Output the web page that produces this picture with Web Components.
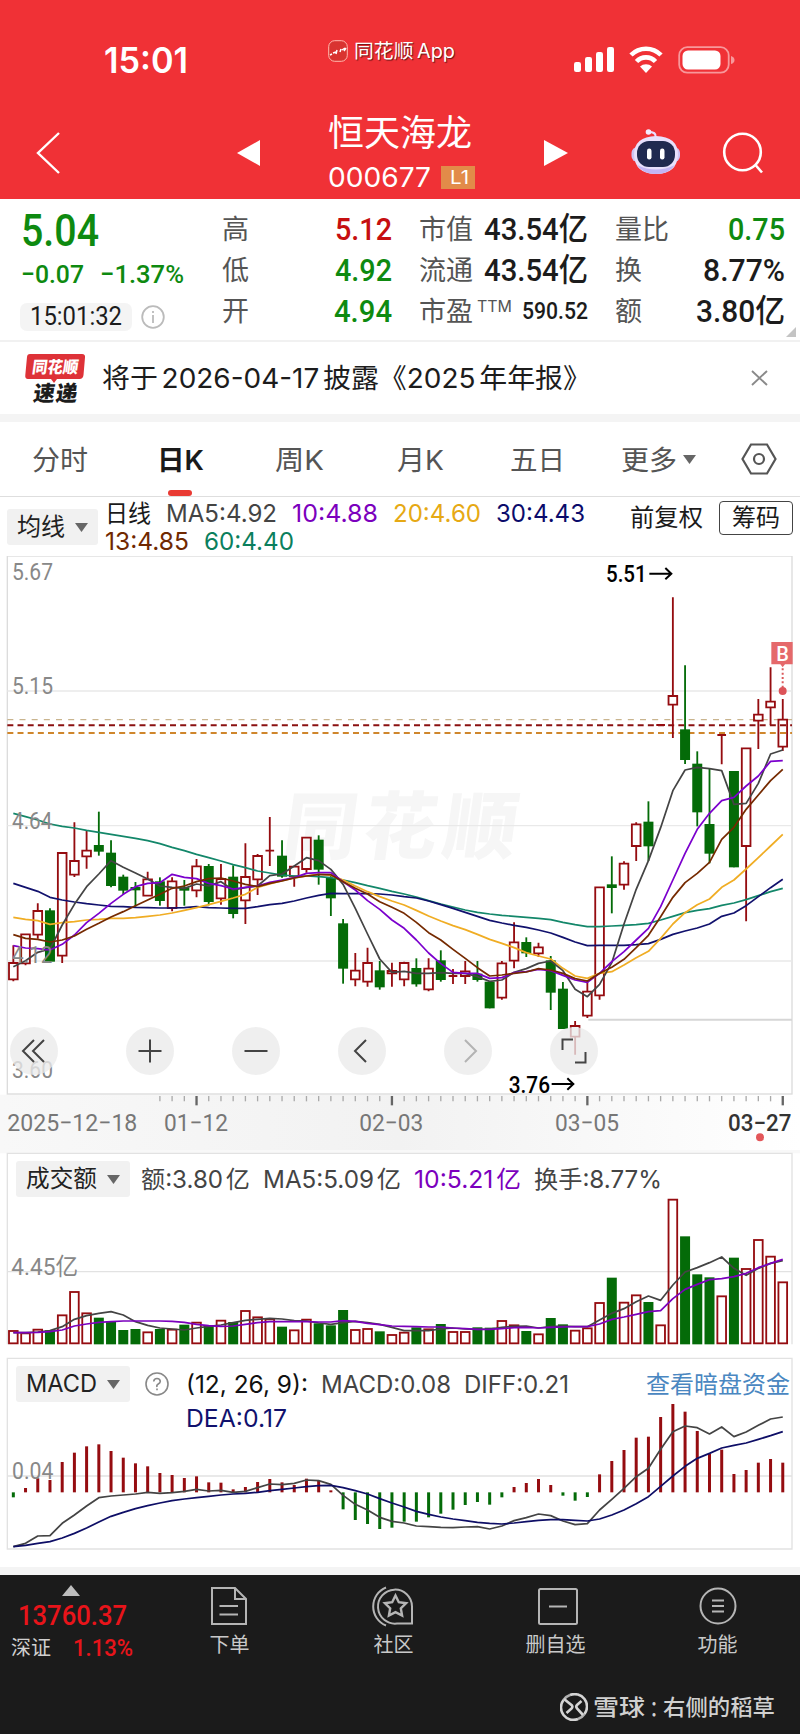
<!DOCTYPE html>
<html lang="zh-CN">
<head>
<meta charset="utf-8">
<title>恒天海龙 000677</title>
<style>
html,body{
    margin:0;
    padding:0;
    background:#fff;
}
body{
    width:800px;
    height:1734px;
    overflow:hidden;
}
</style>
</head>
<body>
<stock-app></stock-app>
<script>
// text that is squeezed or stretched to a fixed width
class FitText extends HTMLElement {

    constructor() {
        super();
        const shadowRoot = this.attachShadow({ mode: 'open' });
        shadowRoot.innerHTML = `
        <style>
        :host{
            display:inline-block;
            white-space:nowrap;
            flex:none;
        }
        span{
            display:inline-block;
            transform-origin:0 50%;
        }
        </style>
        <span><slot></slot></span>
        `
    }

    connectedCallback() {
        const w = Number(this.getAttribute('w'));
        const span = this.shadowRoot.querySelector('span');
        this.style.width = w + 'px';
        span.style.transform = `scaleX(${w/span.getBoundingClientRect().width})`;
    }
}

customElements.define('fit-text', FitText);

const sans = `Inter,"Noto Sans CJK SC",sans-serif`;
const din = `Roboto,"Noto Sans CJK SC",sans-serif`;

// elements that only have markup and styles
function define(name, html) {
    customElements.define(name, class extends HTMLElement {
        constructor() {
            super();
            this.attachShadow({ mode: 'open' }).innerHTML = html;
        }
    });
}

define('status-bar', `
<style>
:host{
    display:flex;
    align-items:center;
    height:98px;
    padding-top:12px;
    box-sizing:border-box;
    color:#fff;
}
.time{
    margin-left:104px;
    padding-top:9px;
    font:600 35px/36px ${sans};
}
.app{
    display:flex;
    align-items:center;
    margin:-8px 0 0 140px;
    font:400 19.5px/24px ${sans};
    text-shadow:1px 1px 1px rgba(0,0,0,.6);
    word-spacing:-2px;
}
.app svg{
    margin-right:6px;
}
.state{
    margin:10px 0 0 119px;
}
</style>
<fit-text class="time" w="84">15:01</fit-text>
<div class="app">
    <svg width="20" height="22" fill="none" stroke="#ffb9ae"><rect x=".7" y=".7" width="18.6" height="20.6" rx="6" fill="#d93430"/><path stroke="#fff" stroke-width="1.5" d="M2 15l2-1M5 13l3-1M8 14l1-4M12 12l1-3M14 10l3-2M16 11l2-3"/></svg>
    <fit-text w="101">同花顺 App</fit-text>
</div>
<svg class="state" width="162" height="28" fill="#fff">
    <rect x="0" y="16" width="7" height="10" rx="2.2"/><rect x="11" y="11" width="7" height="15" rx="2.2"/><rect x="22" y="6" width="7" height="20" rx="2.2"/><rect x="33" y="1" width="7" height="25" rx="2.2"/>
    <g fill="none" stroke="#fff" stroke-width="4.6"><path d="M57 9a21 21 0 0 1 30 0"/><path d="M62.5 15.5a13 13 0 0 1 19 0"/></g>
    <path d="M66 20.5a9 9 0 0 1 12 0L72 27z"/>
    <rect x="105.2" y="1.2" width="49.5" height="25.5" rx="8" fill="none" stroke="#fff" stroke-opacity=".5" stroke-width="1.8"/>
    <rect x="108.5" y="4.5" width="38" height="19" rx="5.5"/>
    <path fill-opacity=".5" d="M157 10q3.5 1 3.5 4t-3.5 4z"/>
</svg>
`);

define('nav-bar', `
<style>
:host{
    display:flex;
    align-items:center;
    height:102px;
    color:#fff;
}
svg{
    flex:none;
}
.name{
    display:flex;
    flex-direction:column;
    width:215px;
    height:98px;
    margin-left:68px;
}
.stock{
    font:400 36px/46px ${sans};
    margin-top:10px;
}
.code{
    display:flex;
    align-items:center;
    height:26px;
    margin-top:8px;
    font:400 27.5px/26px ${sans};
}
.badge{
    width:34px;
    height:23px;
    margin-left:10px;
    background:#e28b49;
    font:400 18px/23px ${sans};
    text-align:center;
}
</style>
<svg style="margin:8px 0 0 36px" width="24" height="42" fill="none" stroke="#fff" stroke-width="2.4"><path d="M23 1L2 21L23 41"/></svg>
<svg style="margin:8px 0 0 177px" width="23" height="26" fill="#fff"><path d="M23 0V26L0 13z"/></svg>
<div class="name">
    <fit-text class="stock" w="144">恒天海龙</fit-text>
    <div class="code"><fit-text w="103">000677</fit-text><div class="badge"><fit-text w="19">L1</fit-text></div></div>
</div>
<svg style="margin:8px 0 0 1px" width="24" height="26" fill="#fff"><path d="M0 0V26L24 13z"/></svg>
<svg style="margin:6px 0 0 62px" width="52" height="48">
    <path d="M25.5 9q1-5-7-5" fill="none" stroke="#e9ddff" stroke-width="2.2"/>
    <circle cx="18.500" cy="4" r="2.800" fill="#f3eaff"/>
    <rect x="1.500" y="19" width="48.500" height="15" rx="6" fill="#cfc4f4"/>
    <path d="M26 8Q48 8.500 48 27Q47 46 26 46T4 27Q4 8.500 26 8z" fill="#e8e0fc"/>
    <path d="M7 37q19 9 38 0q-6 9-19 9T7 37" fill="#c3b5f5"/>
    <rect x="7" y="13" width="38" height="26" rx="12" fill="#202a50"/>
    <rect x="17" y="20.500" width="4.500" height="11" rx="2.200" fill="#fff"/>
    <rect x="30" y="20.500" width="4.500" height="11" rx="2.200" fill="#fff"/>
</svg>
<svg style="margin:8px 0 0 40px" width="44" height="42" fill="none" stroke="#fff" stroke-width="2.6"><circle cx="20.500" cy="20" r="18.300"/><path d="M33.500 33L40 40.500"/></svg>
`);

define('quote-board', `
<style>
:host{
    display:grid;
    grid-template-columns:201px 191px 196px 197px;
    height:142px;
    box-sizing:border-box;
    border-bottom:2px solid #f1f1f1;
    font:400 27px/41px ${sans};
    color:#555;
    position:relative;
}
.now{
    display:flex;
    flex-direction:column;
    padding-left:21px;
    color:#0e8a10;
    font-family:${din};
}
.price{
    font-size:43.500px;
    font-weight:500;
    line-height:44px;
    margin-top:10px;
}
.change{
    display:flex;
    gap:16px;
    font-size:26.500px;
    font-weight:500;
    line-height:30px;
    margin-top:5px;
}
.clock{
    display:flex;
    align-items:center;
    gap:9px;
    margin:14px 0 0 -1px;
}
.pill{
    width:112px;
    height:28px;
    border-radius:7px;
    background:#f4f4f4;
    color:#1c1c1c;
    font-size:25px;
    line-height:28px;
    text-align:center;
}
.col{
    display:flex;
    flex-direction:column;
    padding-top:9px;
}
.row{
    display:flex;
    align-items:center;
    justify-content:space-between;
    height:41px;
    padding-left:27px;
}
.col.first .row{
    padding-left:21px;
}
b{
    font:500 32px/41px ${din};
    color:#1c1c1c;
}
.up{
    color:#c60f10;
}
.down{
    color:#0e8a10;
}
.ttm{
    font-size:15.500px;
    line-height:16px;
    margin:-9px auto 0 4px;
}
.corner{
    position:absolute;
    right:4px;
    bottom:3px;
}
</style>
<div class="now">
    <fit-text class="price" w="78">5.04</fit-text>
    <div class="change"><fit-text w="63">−0.07</fit-text><fit-text w="84">−1.37%</fit-text></div>
    <div class="clock">
        <div class="pill"><fit-text w="92">15:01:32</fit-text></div>
        <svg width="24" height="24" fill="none" stroke="#bbb" stroke-width="1.800"><circle cx="12" cy="12" r="10.800"/><path d="M12 6v2M12 10v8"/></svg>
    </div>
</div>
<div class="col first">
    <div class="row">高<b class="up"><fit-text w="57">5.12</fit-text></b></div>
    <div class="row">低<b class="down"><fit-text w="57">4.92</fit-text></b></div>
    <div class="row">开<b class="down"><fit-text w="58">4.94</fit-text></b></div>
</div>
<div class="col">
    <div class="row">市值<b><fit-text w="104">43.54亿</fit-text></b></div>
    <div class="row">流通<b><fit-text w="104">43.54亿</fit-text></b></div>
    <div class="row">市盈<fit-text class="ttm" w="35">TTM</fit-text><b style="font-size:24px"><fit-text w="66">590.52</fit-text></b></div>
</div>
<div class="col">
    <div class="row">量比<b class="down"><fit-text w="57">0.75</fit-text></b></div>
    <div class="row">换<b><fit-text w="82">8.77%</fit-text></b></div>
    <div class="row">额<b><fit-text w="89">3.80亿</fit-text></b></div>
</div>
<svg class="corner" width="10" height="10"><path d="M10 0V10H0z" fill="#c4c4c4"/></svg>
`);

define('news-bar', `
<style>
:host{
    display:flex;
    align-items:center;
    height:80px;
    box-sizing:border-box;
    border-bottom:8px solid #f4f4f4;
    font:400 27px/40px ${sans};
    color:#1c1c1c;
}
svg{
    flex:none;
}
</style>
<svg style="margin:0 0 0 24px" width="64" height="56" text-anchor="middle">
    <path d="M6 4H58Q61.500 4 61 7.500L59.500 25Q59 29 55.500 29H33L30 33L27 29H4Q.8 29 1.300 25L3 7Q3.200 4 6 4z" fill="#de3238"/>
    <text transform="translate(30.500 23) skewX(-8)" font-family='"Noto Sans CJK SC",sans-serif' font-size="16.500" font-weight="900" fill="#fff" textLength="46" lengthAdjust="spacingAndGlyphs">同花顺</text>
    <text transform="translate(30.500 51) skewX(-8)" font-family='"Noto Sans CJK SC",sans-serif' font-size="21.500" font-weight="900" fill="#1c1c1c" textLength="44">速递</text>
</svg>
<fit-text style="margin:2px 0 0 14px;word-spacing:-4px" w="489">将于 2026-04-17 披露《2025 年年报》</fit-text>
<svg style="margin-left:160px" width="17" height="16" fill="none" stroke="#8a8a8a" stroke-width="1.900"><path d="M1 1L16 15M16 1L1 15"/></svg>
`);

define('period-tabs', `
<style>
:host{
    display:flex;
    align-items:center;
    height:75px;
    box-sizing:border-box;
    border-bottom:1px solid #dedede;
    font:400 27.500px/76px ${sans};
    color:#555;
}
.on{
    display:flex;
    flex-direction:column;
    align-items:center;
    height:74px;
    color:#1a1a1a;
    font-weight:600;
}
.on i{
    width:24px;
    height:6px;
    border-radius:3px;
    margin:-8px 2px 0 0;
    background:#e93a33;
}
svg{
    flex:none;
}
</style>
<fit-text style="margin:2px 0 0 32px" w="56">分时</fit-text>
<div class="on" style="margin-left:69px"><fit-text w="47">日K</fit-text><i></i></div>
<fit-text style="margin:2px 0 0 71px" w="49">周K</fit-text>
<fit-text style="margin:2px 0 0 73px" w="47">月K</fit-text>
<fit-text style="margin:2px 0 0 66px" w="55">五日</fit-text>
<fit-text style="margin:2px 0 0 56px" w="56">更多</fit-text>
<svg style="margin-left:6px" width="13" height="9"><path d="M0 0H13L6.500 9z" fill="#666"/></svg>
<svg style="margin-left:45px" width="36" height="32" fill="none" stroke="#555" stroke-width="2.200"><path d="M10 1.500H26L34.500 16L26 30.500H10L1.500 16z"/><circle cx="18" cy="16" r="5"/></svg>
`);

define('drop-button', `
<style>
:host{
    display:flex;
    align-items:center;
    justify-content:space-between;
    box-sizing:border-box;
    height:36px;
    padding:0 10px 0 10px;
    border-radius:3px;
    background:#f1f1f1;
    color:#222;
}
</style>
<slot></slot><svg width="13" height="9"><path d="M0 0H13L6.500 9z" fill="#666"/></svg>
`);

define('ma-legend', `
<style>
:host{
    display:flex;
    height:59px;
    box-sizing:border-box;
    padding-left:7px;
    font:400 24px/28px ${sans};
    color:#1a1a1a;
}
drop-button{
    width:91px;
    flex:none;
    margin-top:12px;
}
.lines{
    width:511px;
    flex:none;
    padding:3px 0 0 7px;
}
.lines div{
    display:flex;
    gap:15px;
    height:28px;
}
.chip{
    width:74px;
    height:34px;
    margin:4px 0 0 16px;
    box-sizing:border-box;
    border:1.500px solid #444;
    border-radius:4px;
    line-height:31px;
    text-align:center;
}
</style>
<drop-button><fit-text w="48">均线</fit-text></drop-button>
<div class="lines">
    <div><fit-text w="46">日线</fit-text><fit-text w="111" style="color:#444">MA5:4.92</fit-text><fit-text w="86" style="color:#7b00bd">10:4.88</fit-text><fit-text w="88" style="color:#e6a914">20:4.60</fit-text><fit-text w="89" style="color:#0b0b6b">30:4.43</fit-text></div>
    <div><fit-text w="84" style="color:#702800">13:4.85</fit-text><fit-text w="90" style="color:#0b7f5d">60:4.40</fit-text></div>
</div>
<fit-text style="margin:7px 0 0 14px" w="73">前复权</fit-text>
<div class="chip"><fit-text w="48">筹码</fit-text></div>
`);

// Chart data. All y values are thirds of a pixel, one entry per trading day.
// [up, high, body top, body bottom, low]
const candles = [
    [1,496,549,598,604],[1,462,463,550,556],[1,370,393,464,476],[0,385,391,545,545],[1,217,219,527,549],[1,127,243,284,291],[1,152,212,229,266],[0,95,195,215,227],
    [0,181,218,318,322],[0,284,290,332,343],[0,306,321,331,380],[1,275,298,347,347],[0,292,304,363,377],[1,292,304,384,394],[0,300,322,332,377],[1,237,259,331,352],
    [0,252,258,366,376],[1,252,297,355,374],[0,256,290,402,415],[1,190,291,361,432],[1,222,228,298,345],[1,111,212,212,258],[0,181,227,290,293],[1,258,260,289,320],
    [1,172,173,267,278],[0,166,179,269,314],[0,288,294,355,408],[0,417,430,566,611],[1,519,572,598,619],[1,503,549,605,620],[0,543,571,622,629],[1,548,573,580,620],
    [1,545,549,598,619],[0,535,564,613,620],[1,535,566,628,634],[0,511,541,600,605],[1,567,588,588,612],[1,543,574,588,612],[0,543,581,600,605],[0,603,605,685,685],
    [1,543,550,653,659],[1,427,487,542,565],[0,472,486,520,531],[1,488,502,520,531],[0,528,541,638,690],[0,606,626,747,747],[1,723,738,770,824],[1,600,635,707,714],
    [1,322,322,646,659],[0,229,313,324,400],[1,244,251,314,329],[1,127,133,198,243],[0,64,125,199,243],[1,-165,-165,-165,-165],[1,-548,-252,-226,-126],[0,-344,-152,-60,-48],
    [0,-86,-49,97,139],[0,-35,132,221,250],[1,-137,-135,-135,-47],[0,-27,-27,262,262],[1,-96,-95,198,424],[1,-243,-196,-178,-93],[1,-338,-235,-218,-165],[1,-243,-181,-100,-87]
];
const averages = [
    ['#13876a', [100,110,120,132,139,144,151,157,163,169,175,182,191,202,212,223,233,243,254,263,273,279,285,288,288,290,293,300,308,317,325,334,342,351,362,372,381,390,397,402,406,409,412,415,419,427,434,440,440,438,436,434,430,420,409,398,391,386,376,369,359,347,335,325]],
    ['#11116d', [310,322,334,352,360,366,371,375,379,380,382,383,384,384,383,380,383,384,385,385,380,374,370,363,354,346,340,341,341,341,342,345,350,354,363,374,385,397,409,421,429,436,442,450,459,472,486,497,496,496,496,494,491,478,463,453,444,432,409,399,377,350,323,298]],
    ['#f0ad24', [412,418,422,433,428,425,420,418,415,415,413,409,405,399,391,383,374,364,354,343,322,312,302,294,288,282,286,300,318,335,350,363,375,391,408,423,437,449,463,478,490,503,518,528,537,565,588,595,580,575,555,533,514,475,432,398,374,357,322,300,267,233,198,163]],
    ['#444', [560,542,517,507,435,373,320,282,242,262,279,297,318,322,325,312,318,305,330,323,318,287,282,258,233,242,268,313,385,462,537,577,574,580,580,578,580,580,590,604,600,577,566,550,543,572,628,650,613,548,432,328,242,143,32,-30,-38,-34,-28,73,70,10,-78,-90]],
    ['#7b00cd', [497,504,506,510,493,465,428,400,370,343,320,310,308,283,292,296,310,317,327,322,318,307,300,293,280,278,278,305,330,362,388,420,445,480,519,551,577,580,580,595,593,578,575,568,572,586,600,607,580,545,515,480,445,380,300,220,148,100,62,52,18,-12,-56,-58]],
    ['#752a00', [464,475,478,486,480,468,448,430,411,395,377,360,343,325,318,305,296,294,303,313,320,310,303,294,288,284,284,305,325,342,365,382,400,427,458,480,508,535,563,588,585,580,576,566,570,580,596,603,580,562,538,503,466,410,352,308,280,247,178,142,88,45,2,-32]]
];
const turnover = [541,548,537,541,494,424,488,503,513,540,537,545,537,537,524,516,528,510,516,481,500,506,530,539,507,520,526,480,538,535,544,553,546,532,536,522,544,544,532,533,511,524,543,551,504,523,540,533,457,383,456,434,456,524,147,259,373,382,437,323,355,268,318,395];
const turnoverMa = [
    ['#444', [548,548,546,542,530,508,497,490,485,495,515,526,534,537,540,534,529,525,518,511,508,505,507,512,513,519,523,518,514,518,523,532,542,542,542,537,534,537,538,537,532,529,528,534,530,528,530,530,510,490,476,455,438,451,405,366,353,338,321,355,376,355,340,332]],
    ['#7b00bd', [548,548,547,545,540,528,522,517,515,513,513,513,513,514,517,523,527,529,528,523,518,515,515,515,515,516,516,512,514,520,524,528,529,530,531,531,534,536,538,538,536,533,532,534,532,531,530,530,522,508,501,493,485,482,446,418,403,389,386,380,370,353,340,328]]
];
const macd = [1042,1014,985,990,936,908,889,883,903,923,940,949,969,975,984,979,997,998,1018,1011,996,987,997,1005,986,993,1021,1078,1110,1122,1137,1133,1115,1115,1102,1091,1079,1065,1056,1064,1042,1011,999,987,1005,1037,1052,1041,973,933,900,863,860,801,762,785,843,912,899,972,960,938,927,938];
const macdLines = [
    ['#444', [1190,1180,1158,1157,1120,1095,1068,1043,1038,1035,1032,1027,1030,1028,1024,1018,1023,1021,1027,1024,1013,1002,1004,1000,990,992,1003,1036,1063,1080,1102,1114,1119,1128,1130,1132,1133,1131,1130,1137,1128,1112,1103,1092,1097,1113,1124,1121,1080,1048,1015,980,955,898,845,828,833,852,831,860,846,826,807,801]],
    ['#0e0e66', [1190,1186,1180,1175,1164,1150,1134,1116,1099,1087,1076,1067,1059,1052,1047,1043,1039,1035,1032,1030,1027,1022,1018,1014,1010,1007,1006,1013,1022,1032,1046,1059,1071,1084,1093,1101,1107,1112,1117,1120,1122,1119,1115,1111,1109,1109,1111,1113,1107,1095,1080,1061,1040,1009,978,949,925,910,894,886,879,868,857,845]]
];
const RED = '#950c10';
const GREEN = '#046b08';
const day = i => +(40 + i*36.64).toFixed(1);
const lines = list => list.map(([color,ys]) => `<polyline points="${ys.map((y,i)=>day(i)+','+y).join(' ')}" fill="none" stroke="${color}" stroke-width="5.200" stroke-linejoin="round"/>`).join('');
const label = (x,y,w,text,fill='#888') => `<text x="${x}" y="${y}" textLength="${w}" lengthAdjust="spacingAndGlyphs" fill="${fill}">${text}</text>`;

class KChart extends HTMLElement {

    constructor() {
        super();
        const shadowRoot = this.attachShadow({ mode: 'open' });
        shadowRoot.innerHTML = `
        <style>
        :host{
            display:grid;
            height:594px;
        }
        svg,.tools{
            grid-area:1/1;
        }
        text{
            font:400 72px ${din};
        }
        .peak text,.today text{
            font-weight:500;
        }
        .logo{
            font:900 220px "Noto Sans CJK SC",sans-serif;
        }
        .tools{
            display:flex;
            align-self:start;
            margin:471px 0 0 10px;
            gap:58px;
            z-index:1;
        }
        .tools svg{
            display:block;
            width:48px;
            height:48px;
            border-radius:50%;
            background:rgba(234,234,234,.78);
            fill:none;
            stroke:#444;
            stroke-width:2;
        }
        </style>
        <svg width="800" height="594" viewBox="0 -672 2400 1782">
            <defs><linearGradient id="axis"><stop offset="0" stop-color="#f8f8f8"/><stop offset=".5" stop-color="#f2f2f2"/><stop offset="1" stop-color="#fff"/></linearGradient></defs>
            <rect x="0" y="944" width="2400" height="166" fill="url(#axis)"/>
            <rect x="22" y="-672" width="2354" height="1614" fill="#fff" stroke="#dcdcdc" stroke-width="4"/>
            <text class="logo" transform="translate(842 218) skewX(-8)" textLength="700" fill="#f6f6f6">同花顺</text>
            <path d="M22-267H2376M22 137H2376M22 543H2376" stroke="#e9e9e9" stroke-width="4"/>
            <g fill="none" stroke-width="5">
                <path d="M22-181H2376" stroke="#c9b48e" stroke-width="4" stroke-dasharray="18 18.500"/>
                <path d="M22-164H2376" stroke="#8a1010" stroke-width="6" stroke-dasharray="18 12.500"/>
                <path d="M22-141H2376" stroke="#cf862c" stroke-width="6" stroke-dasharray="18 12.500"/>
            </g>
            <path d="M1765 719H2376" stroke="#d6d6d6" stroke-width="6"/>
            ${this.candles()}
            ${lines(averages)}
            ${label(36,-600,123,'5.67')}${label(36,-257,123,'5.15')}${label(36,147,121,'4.64')}${label(36,550,121,'4.12')}${label(36,895,123,'3.60')}
            <g class="peak">${label(1818,-595,122,'5.51','#000')}${label(1526,938,124,'3.76','#000')}</g>
            <path d="M1948-619H2014M1996-636L2014-619L1996-602M1655 912H1720M1702 895L1720 912L1702 929" fill="none" stroke="#000" stroke-width="6"/>
            <path d="M2314-414H2378V-347H2355L2348-338L2341-347H2314z" fill="#e5696b"/>
            <text x="2329" y="-358" style="font-size:60px;font-weight:500" fill="#fff">B</text>
            <path d="M2348-335V-275" stroke="#dc5a5c" stroke-width="6" stroke-dasharray="6 7"/>
            <circle cx="2348" cy="-267" r="12" fill="#dc5358"/>
            ${this.ticks()}
            ${label(22,1053,390,'2025−12−18','#777')}${label(492,1053,192,'01−12','#777')}${label(1078,1053,192,'02−03','#777')}${label(1665,1053,192,'03−05','#777')}
            <g class="today">${label(2184,1053,190,'03−27','#333')}</g>
            <circle cx="2280" cy="1072" r="12" fill="#e35659"/>
        </svg>
        <div class="tools">
            <svg><path d="M24 13L13 24L24 35M34 13L23 24L34 35"/></svg>
            <svg style="margin-left:10px"><path d="M24 12.500V35.500M12.500 24H35.500"/></svg>
            <svg><path d="M12.500 24H35.500"/></svg>
            <svg><path d="M28 13L17 24L28 35"/></svg>
            <svg stroke-opacity=".35"><path d="M21 13L32 24L21 35"/></svg>
            <svg><path d="M12.500 23V12.500H23M25 35.500H35.500V25"/></svg>
        </div>
        `
    }

    candles() {
        return candles.map(([up,high,top,bottom,low],i)=>{
            const x = day(i);
            if( up ){
                return `<path d="M${x} ${high}V${top}M${x} ${bottom}V${low}M${x-13} ${top}H${x+13}V${bottom}H${x-13}z" fill="none" stroke="${RED}" stroke-width="5.500"/>`;
            }
            return `<path d="M${x} ${high}V${low}" stroke="${GREEN}" stroke-width="5.500"/><rect x="${x-15}" y="${top}" width="30" height="${bottom-top}" fill="${GREEN}"/>`;
        }).join('');
    }

    ticks() {
        let d = '';
        for (let i = 12; i < 64; i++) {
            const big = [15,31,47,63].includes(i);
            d += `<path d="M${day(i)} ${948}V${big?976:964}" stroke="${big?'#666':'#aaa'}" stroke-width="${big?7:4}"/>`;
        }
        return d;
    }
}

customElements.define('k-chart', KChart);

class TurnoverChart extends HTMLElement {

    constructor() {
        super();
        const shadowRoot = this.attachShadow({ mode: 'open' });
        shadowRoot.innerHTML = `
        <style>
        :host{
            display:grid;
            height:200px;
            font:400 24px/38px ${sans};
            color:#444;
        }
        svg,.head{
            grid-area:1/1;
        }
        text{
            font:400 72px ${din};
        }
        .head{
            display:flex;
            align-self:start;
            margin:11px 0 0 16px;
            gap:14px;
            word-spacing:-4px;
        }
        drop-button{
            width:114px;
            margin-right:-3px;
        }
        </style>
        <svg width="800" height="200" viewBox="0 0 2400 600">
            <rect width="2400" height="10" fill="#f8f8f8"/>
            <path d="M22 583V10H2376V583M22 365H2376" fill="none" stroke="#e2e2e2" stroke-width="4"/>
            ${turnover.map((y,i)=>candles[i][0]
                ?`<rect x="${day(i)-13}" y="${y+2}" width="26" height="${578-y}" fill="none" stroke="${RED}" stroke-width="5.500"/>`
                :`<rect x="${day(i)-15}" y="${y}" width="30" height="${583-y}" fill="${GREEN}"/>`).join('')}
            ${lines(turnoverMa)}
            ${label(34,375,200,'4.45亿')}
        </svg>
        <div class="head">
            <drop-button><fit-text w="71">成交额</fit-text></drop-button>
            <fit-text w="109">额:3.80 亿</fit-text>
            <fit-text w="138" style="margin-left:-1px">MA5:5.09 亿</fit-text>
            <fit-text w="107" style="color:#7b00bd;margin-left:-1px">10:5.21 亿</fit-text>
            <fit-text w="128" style="margin-left:-1px">换手:8.77%</fit-text>
        </div>
        `
    }
}

customElements.define('turnover-chart', TurnoverChart);

class MacdChart extends HTMLElement {

    constructor() {
        super();
        const shadowRoot = this.attachShadow({ mode: 'open' });
        shadowRoot.innerHTML = `
        <style>
        :host{
            display:grid;
            height:217px;
            border-bottom:8px solid #f4f4f4;
            font:400 24px/38px ${sans};
            color:#444;
        }
        svg,.head{
            grid-area:1/1;
        }
        text{
            font:400 72px ${din};
        }
        .head{
            display:flex;
            align-self:start;
            align-items:start;
            margin:16px 0 0 16px;
        }
        drop-button{
            width:114px;
        }
        .values{
            display:flex;
            flex-wrap:wrap;
            width:460px;
            gap:0 13px;
            margin:2px 0 0 17px;
            line-height:34px;
        }
        </style>
        <svg width="800" height="217" viewBox="0 600 2400 651">
            <path d="M22 625H2376V1197H22zM22 978H2376" fill="none" stroke="#e2e2e2" stroke-width="4"/>
            ${macd.map((y,i)=>`<path d="M${day(i)} 1027V${y}" stroke="${y<1027?RED:GREEN}" stroke-width="9"/>`).join('')}
            ${lines(macdLines)}
            ${label(36,988,124,'0.04')}
        </svg>
        <div class="head">
            <drop-button><fit-text w="71">MACD</fit-text></drop-button>
            <svg style="margin:6px 0 0 15px;flex:none" width="24" height="24" fill="none" stroke="#888" stroke-width="1.600"><circle cx="12" cy="12" r="11"/><path d="M8.700 9.500Q9 6.500 12 6.500T15.300 9.300Q15.300 11 13.300 12T12 15M12 16.500V18.300"/></svg>
            <div class="values">
                <fit-text w="122" style="color:#111">(12, 26, 9):</fit-text>
                <fit-text w="130">MACD:0.08</fit-text>
                <fit-text w="105">DIFF:0.21</fit-text>
                <fit-text w="101" style="color:#11116d">DEA:0.17</fit-text>
            </div>
            <fit-text w="144" style="color:#4a87c1">查看暗盘资金</fit-text>
        </div>
        `
    }
}

customElements.define('macd-chart', MacdChart);

define('foot-item', `
<style>
:host{
    display:flex;
    flex-direction:column;
    align-items:center;
    width:163px;
    font:400 20px/30px ${sans};
    color:#c9c9c9;
}
::slotted(svg){
    width:44px;
    height:44px;
    margin:9px 0 2px;
    fill:none;
    stroke:#b5b5b5;
    stroke-width:2;
}
</style>
<slot></slot>
`);

define('foot-bar', `
<style>
:host{
    display:flex;
    flex-direction:column;
    height:159px;
    background:#1b1b1b;
    color:#d0d0d0;
    font:400 20px/30px ${sans};
}
.items{
    display:flex;
    height:104px;
}
.index{
    display:flex;
    flex-direction:column;
    width:148px;
}
.red{
    color:#e8141a;
    font-family:${din};
    font-weight:500;
}
.index div{
    display:flex;
    align-items:center;
    gap:22px;
    height:30px;
    padding-left:11px;
}
.mark{
    display:flex;
    align-items:center;
    justify-content:flex-end;
    height:56px;
    margin-top:2px;
    padding-right:25px;
    font-size:22px;
    font-weight:500;
}
.mark svg{
    margin-right:5px;
}
</style>
<div class="items">
    <div class="index">
        <svg style="margin:10px 0 0 62px" width="18" height="11"><path d="M9 0L18 11H0z" fill="#bdbdbd"/></svg>
        <fit-text class="red" style="margin:3px 0 0 18px;font-size:28px;line-height:34px" w="109">13760.37</fit-text>
        <div><fit-text w="40">深证</fit-text><fit-text class="red" style="font-size:23.500px" w="60">1.13%</fit-text></div>
    </div>
    <foot-item><svg viewBox="0 0 44 44"><path d="M4 4H27L38 15V40H4zM27 4V15H38M11.500 22H30M11.500 30.500H30"/></svg>下单</foot-item>
    <foot-item style="margin-left:1px"><svg viewBox="0 0 44 44"><path d="M40 39.500H25A17 17 0 1 1 40 22.500zM14 3.500A20.500 20.500 0 0 0 14 41.500"/><path stroke-width="2.400" d="M23.500 11.500L26.800 18.200L34.100 19.200L28.800 24.300L30.100 31.600L23.500 28.100L16.900 31.600L18.200 24.300L12.900 19.200L20.200 18.200z"/></svg>社区</foot-item>
    <foot-item style="margin-left:-1px"><svg viewBox="0 0 44 44"><rect x="5" y="5" width="38" height="35" rx="1.500"/><path d="M15 22.500H33"/></svg>删自选</foot-item>
    <foot-item style="margin-left:-1px"><svg viewBox="0 0 44 44"><circle cx="22" cy="22" r="17.500"/><path d="M16 16.500H28M16 22H28M16 27.500H28"/></svg>功能</foot-item>
</div>
<div class="mark">
    <svg width="28" height="28" fill="none" stroke="#d5d5d5" stroke-width="2.600"><path d="M10 2A12.400 12.400 0 0 1 24.500 21M18 26A12.400 12.400 0 0 1 3.500 7"/><path d="M24.500 21A12.400 12.400 0 0 1 18 26M3.500 7A12.400 12.400 0 0 1 10 2" stroke-opacity=".8"/><path d="M4 6L12 12.500Q13 14 11.500 15.500L6.500 20M21.500 8L17 12Q15.500 13.500 17 15.500L23 22"/></svg>
    <fit-text w="52">雪球</fit-text>
    <fit-text style="font-family:'Noto Sans CJK TC',sans-serif" w="18">：</fit-text>
    <fit-text w="112">右侧的稻草</fit-text>
</div>
`);

define('stock-app', `
<style>
:host{
    display:flex;
    flex-direction:column;
    width:800px;
    height:1734px;
    overflow:hidden;
    background:#fff;
}
header{
    height:199px;
    margin-bottom:1px;
    background:#f03136;
}
</style>
<header>
    <status-bar></status-bar>
    <nav-bar></nav-bar>
</header>
<quote-board></quote-board>
<news-bar></news-bar>
<period-tabs></period-tabs>
<ma-legend></ma-legend>
<k-chart></k-chart>
<turnover-chart></turnover-chart>
<macd-chart></macd-chart>
<foot-bar></foot-bar>
`);
</script>
</body>
</html>
